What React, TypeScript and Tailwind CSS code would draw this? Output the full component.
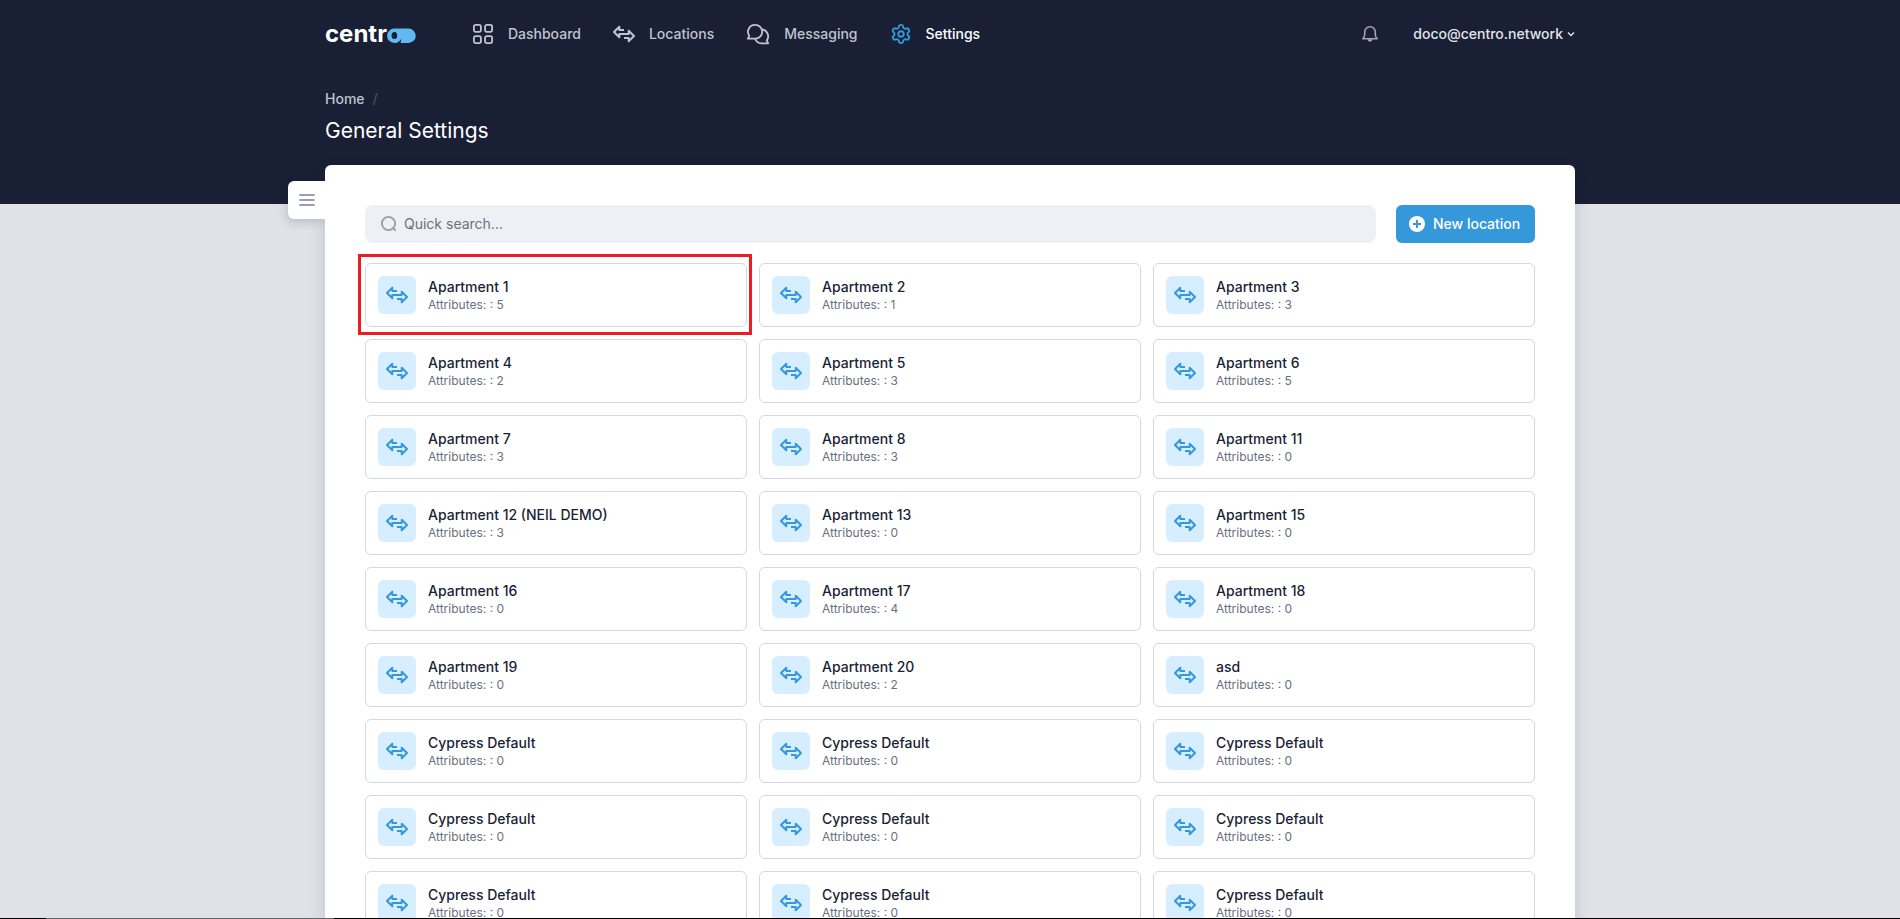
import React from "react";
import clsx from "clsx";
import { Settings } from "lucide-react";

type IconProps = { className?: string };

type Location = {
  name: string;
  attributes: number;
  highlighted?: boolean;
};

const locations: Location[] = [
  { name: "Apartment 1", attributes: 5, highlighted: true },
  { name: "Apartment 2", attributes: 1 },
  { name: "Apartment 3", attributes: 3 },
  { name: "Apartment 4", attributes: 2 },
  { name: "Apartment 5", attributes: 3 },
  { name: "Apartment 6", attributes: 5 },
  { name: "Apartment 7", attributes: 3 },
  { name: "Apartment 8", attributes: 3 },
  { name: "Apartment 11", attributes: 0 },
  { name: "Apartment 12 (NEIL DEMO)", attributes: 3 },
  { name: "Apartment 13", attributes: 0 },
  { name: "Apartment 15", attributes: 0 },
  { name: "Apartment 16", attributes: 0 },
  { name: "Apartment 17", attributes: 4 },
  { name: "Apartment 18", attributes: 0 },
  { name: "Apartment 19", attributes: 0 },
  { name: "Apartment 20", attributes: 2 },
  { name: "asd", attributes: 0 },
  { name: "Cypress Default", attributes: 0 },
  { name: "Cypress Default", attributes: 0 },
  { name: "Cypress Default", attributes: 0 },
  { name: "Cypress Default", attributes: 0 },
  { name: "Cypress Default", attributes: 0 },
  { name: "Cypress Default", attributes: 0 },
  { name: "Cypress Default", attributes: 0 },
  { name: "Cypress Default", attributes: 0 },
  { name: "Cypress Default", attributes: 0 },
];

const IconArrows = ({ className }: IconProps) => (
  <svg
    viewBox="0 0 22 18"
    className={clsx("h-[18px] w-[22px]", className)}
    fill="none"
    stroke="currentColor"
    strokeWidth="2"
    strokeLinejoin="round"
  >
    <path d="M11 5H6.3V1.8L1 7L6.3 12.2V9H15.7V5.8L21 11L15.7 16.2V13H11" />
  </svg>
);

const IconGrid = ({ className }: IconProps) => (
  <svg
    viewBox="0 0 22 22"
    className={clsx("size-[22px]", className)}
    fill="none"
    stroke="currentColor"
    strokeWidth="1.8"
  >
    <rect x="1.9" y="1.9" width="7" height="7" rx="1.8" />
    <rect x="13.1" y="1.9" width="7" height="7" rx="1.8" />
    <rect x="1.9" y="13.1" width="7" height="7" rx="1.8" />
    <rect x="13.1" y="13.1" width="7" height="7" rx="1.8" />
  </svg>
);

const IconChat = ({ className }: IconProps) => (
  <svg
    viewBox="0 0 24 22"
    className={clsx("h-[22px] w-6", className)}
    fill="none"
    stroke="currentColor"
    strokeWidth="1.8"
    strokeLinejoin="round"
    strokeLinecap="round"
  >
    <path d="M9.3 1.9a6.9 6.9 0 1 1 0 13.8H1.9l1.4-2.9A6.9 6.9 0 0 1 9.3 1.9z" />
    <path d="M16.2 6.4a7 7 0 0 1 4.6 11l1.3 3H15.2a7 7 0 0 1-6-4.4" />
  </svg>
);

const IconGear = ({ className }: IconProps) => (
  <Settings className={clsx("size-[22px]", className)} />
);

const IconBell = ({ className }: IconProps) => (
  <svg viewBox="0 0 18 18" className={clsx("size-[18px]", className)}>
    <path
      d="M1.8 13.7C3.2 12.6 3.7 11.5 3.7 9.5V7a5.3 5.3 0 0 1 10.6 0v2.5c0 2 .5 3.1 1.9 4.2z"
      fill="none"
      stroke="currentColor"
      strokeWidth="1.6"
      strokeLinejoin="round"
    />
    <path d="M6.5 14.2h5a2.5 2.5 0 0 1-5 0z" fill="currentColor" />
  </svg>
);

const IconSearch = ({ className }: IconProps) => (
  <svg
    viewBox="0 0 18 18"
    className={clsx("size-[18px]", className)}
    fill="none"
    stroke="currentColor"
    strokeWidth="1.9"
    strokeLinecap="round"
  >
    <circle cx="8.5" cy="8.5" r="6.6" />
    <path d="M13.2 13.2l2 2" />
  </svg>
);

const IconPlus = ({ className }: IconProps) => (
  <svg viewBox="0 0 16 16" className={clsx("size-4", className)}>
    <circle cx="8" cy="8" r="8" fill="currentColor" />
    <path d="M8 4v8M4 8h8" stroke="#3498db" strokeWidth="2" />
  </svg>
);

const Logo = () => (
  <a href="#" aria-label="centro" className="flex items-center">
    <span className="text-[24px] leading-6 font-bold text-white">centr</span>
    <svg viewBox="0 0 29 16" className="mt-1 h-4 w-[29px]">
      <path
        d="M7.3.5h14.2a7.2 7.2 0 0 1 0 14.5H7.3A7.2 7.2 0 0 1 7.3.5z"
        fill="#62b8f0"
      />
      <ellipse cx="7.4" cy="7.6" rx="2.8" ry="3.5" fill="#191f35" />
      <path d="M14.4 10.4C13.4 12.8 11.6 14 9.4 14.8L10 16h3.4z" fill="#191f35" />
    </svg>
  </a>
);

const navItems = [
  { label: "Dashboard", icon: IconGrid },
  { label: "Locations", icon: IconArrows },
  { label: "Messaging", icon: IconChat },
  { label: "Settings", icon: IconGear, active: true },
];

const Header = () => (
  <header className="h-[204px] shrink-0 bg-[#191f35] px-4">
    <div className="mx-auto max-w-[1250px]">
      <div className="flex h-[68px] items-center">
        <Logo />
        <nav className="ml-14 flex items-center gap-8">
          {navItems.map(({ label, icon: Icon, active }) => (
            <a
              key={label}
              href="#"
              className={clsx(
                "flex items-center gap-3.5 text-sm font-medium",
                active ? "text-white" : "text-[#c1c3ce]"
              )}
            >
              <Icon className={active ? "text-[#3498db]" : undefined} />
              {label}
            </a>
          ))}
        </nav>
        <button
          type="button"
          aria-label="Notifications"
          className="ml-auto text-[#a3a6b8]"
        >
          <IconBell />
        </button>
        <button
          type="button"
          className="ml-[34px] flex items-center gap-1 text-sm font-medium text-[#e3e4ea]"
        >
          doco@centro.network
          <svg
            viewBox="0 0 8 8"
            className="size-2"
            fill="none"
            stroke="currentColor"
            strokeWidth="1.4"
          >
            <path d="M1 2.5l3 3 3-3" />
          </svg>
        </button>
      </div>
      <div className="flex items-center gap-2 pt-[21px] text-sm font-medium text-[#c1c3ce]">
        <a href="#">Home</a>
        <span className="text-[#4a4e63]">/</span>
      </div>
      <h1 className="mt-2 text-[21px] leading-7 text-white">
        General Settings
      </h1>
    </div>
  </header>
);

const LocationCard = ({ name, attributes, highlighted }: Location) => (
  <a
    href="#"
    className="relative flex h-16 items-center gap-3 rounded-md border border-[#d5d7df] bg-white px-3"
  >
    <span className="flex size-[38px] items-center justify-center rounded-md bg-[#d6eeff] text-[#3498db]">
      <IconArrows />
    </span>
    <span className="flex flex-col">
      <span className="text-sm leading-5 font-medium text-[#1a1f36]">
        {name}
      </span>
      <span className="text-xs leading-4 text-[#697080]">
        Attributes: : {attributes}
      </span>
    </span>
    {highlighted && (
      <span className="pointer-events-none absolute -top-2.5 -right-1.5 -bottom-[9px] -left-2 border-[3px] border-[#ed1c24]" />
    )}
  </a>
);

export default function App() {
  return (
    <div className="flex h-screen flex-col overflow-hidden bg-[#e1e2e8] font-['Inter',sans-serif]">
      <Header />
      <div className="-mt-[39px] px-4">
        <main className="relative mx-auto max-w-[1250px] rounded-md bg-white p-10 shadow-[0_4px_16px_rgba(26,31,54,0.16)]">
          <button
            type="button"
            aria-label="Open menu"
            className="absolute top-4 -left-[37px] flex size-[38px] items-center justify-center rounded-l-md bg-white text-[#9a9eb3] shadow-[-2px_4px_8px_rgba(26,31,54,0.16)]"
          >
            <svg
              viewBox="0 0 16 12"
              className="h-3 w-4"
              stroke="currentColor"
              strokeWidth="1.8"
              strokeLinecap="round"
            >
              <path d="M1 1h14M1 6h14M1 11h14" />
            </svg>
          </button>
          {/* covers the shadow where the tab meets the panel */}
          <span className="absolute top-4 left-0 h-16 w-4 bg-white" />

          <div className="flex gap-5">
            <label className="flex h-[38px] grow items-center gap-1.5 rounded-lg bg-[#eff0f5] px-[15px]">
              <IconSearch className="shrink-0 text-[#9a9eb3]" />
              <input
                type="text"
                aria-label="Quick search"
                placeholder="Quick search..."
                className="w-full bg-transparent text-sm text-[#1a1f36] placeholder:text-[#697080] focus:outline-none"
              />
            </label>
            <button
              type="button"
              className="flex h-[38px] w-[139px] shrink-0 items-center gap-2 rounded-md bg-[#3498db] px-[13px] text-sm font-medium whitespace-nowrap text-white"
            >
              <IconPlus className="shrink-0" />
              New location
            </button>
          </div>

          <div className="mt-5 grid grid-cols-3 gap-3">
            {locations.map((location, i) => (
              <LocationCard key={i} {...location} />
            ))}
          </div>
        </main>
      </div>
      <div className="fixed inset-x-0 bottom-0 flex h-px bg-black">
        <span className="ml-[46px] w-72 bg-[#656565]" />
      </div>
    </div>
  );
}
